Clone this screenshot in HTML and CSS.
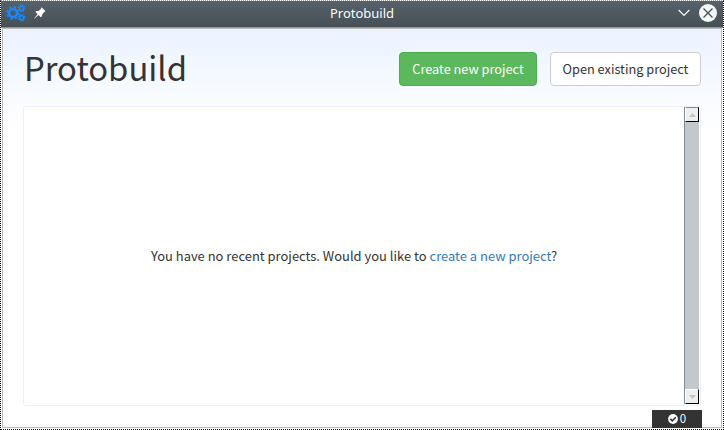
FILE: index.html
```html
<!DOCTYPE html>
<html lang="en">
<head>
<meta charset="utf-8">
<title>Protobuild</title>
<link rel="stylesheet" href="styles.css">
</head>
<body>
<div class="window">
  <header class="titlebar">
    <div class="tools">
      <svg class="gears" width="20" height="18" viewBox="0 0 20 18">
        <g fill="none" stroke="#1a88ff">
          <circle cx="7" cy="9" r="3.9" stroke-width="2.4"/>
          <circle cx="7" cy="9" r="5.7" stroke-width="2" stroke-dasharray="2.4 2.077"/>
          <circle cx="15.6" cy="4.2" r="2" stroke-width="1.4"/>
          <circle cx="15.6" cy="4.2" r="3.2" stroke-width="1.4" stroke-dasharray="1.3 1.213"/>
          <circle cx="15.6" cy="13.8" r="2" stroke-width="1.4"/>
          <circle cx="15.6" cy="13.8" r="3.2" stroke-width="1.4" stroke-dasharray="1.3 1.213"/>
        </g>
      </svg>
      <svg class="pin" width="12" height="12" viewBox="0 0 12 12">
        <path d="M7.5 0.3 11.6 4.2 10.4 4.8 8.2 7.4 7.8 9.6 6.8 10.3 4.5 8 0.5 11.6 0.2 11.3 3.6 7.2 1.5 5 2.3 4.1 4.6 4 7 1.7Z" fill="#fcfcfc"/>
      </svg>
    </div>
    <div class="caption">Protobuild</div>
    <div class="controls">
      <svg width="12" height="8" viewBox="0 0 12 8"><path d="M0.7 1 6 6.3 11.3 1" fill="none" stroke="#fcfcfc" stroke-width="1.2"/></svg>
      <svg width="18" height="18" viewBox="0 0 18 18"><circle cx="9" cy="9" r="9" fill="#f4f5f5"/><path d="M4.5 4.5 13.5 13.5M13.5 4.5 4.5 13.5" stroke="#465056" stroke-width="1.3"/></svg>
    </div>
  </header>
  <main class="page">
    <div class="head">
      <h1>Protobuild</h1>
      <div class="actions">
        <button class="btn primary">Create new project</button>
        <button class="btn">Open existing project</button>
      </div>
    </div>
    <section class="panel">
      <p class="message">You have no recent projects. Would you like to <a>create a new project</a>?</p>
      <div class="scrollbar">
        <div class="arrow"><svg width="7" height="4" viewBox="0 0 7 4"><path d="M3.5 0 7 4H0Z"/></svg></div>
        <div class="arrow"><svg width="7" height="4" viewBox="0 0 7 4"><path d="M0 0H7L3.5 4Z"/></svg></div>
      </div>
    </section>
    <div class="status">
      <svg width="10" height="10" viewBox="0 0 10 10"><circle cx="5" cy="5" r="4.9" fill="#fff"/><path d="M2.3 4.9 4.3 6.8 7.8 3.3" fill="none" stroke="#333" stroke-width="1.6"/></svg>
      <span>0</span>
    </div>
  </main>
</div>
</body>
</html>
```
FILE: styles.css
```css
* { box-sizing: border-box; }
body {
  margin: 0;
  background: #fff;
  color: #333;
  font: 12.93px/20px "Noto Sans CJK SC", "Noto Sans", sans-serif;
}
.window {
  width: 724px;
  height: 430px;
  overflow: hidden;
  border: 1px dotted #000;
  border-top-color: #a89c92;
  display: flex;
  flex-direction: column;
}
.titlebar {
  flex: none;
  height: 27px;
  display: grid;
  grid-template-columns: 1fr auto 1fr;
  align-items: center;
  padding: 0 6px 2px;
  background: linear-gradient(#566169, #465056);
  border-bottom: 1px solid #3daee9;
  color: #fcfcfc;
}
.tools { display: flex; align-items: center; gap: 8px; margin-left: -1px; }
.caption { font: 13px/20px "Noto Sans", sans-serif; }
.controls { display: flex; align-items: center; justify-content: flex-end; gap: 9px; }
.page {
  flex: none;
  height: 400px;
  margin: 0 1px;
  padding: 23px 20px 0;
  border: 1px solid #bbb;
  background: linear-gradient(#ebf3ff, #fff 100px);
}
.head { display: flex; justify-content: space-between; height: 54px; }
h1 { margin: -5px 0 0 1px; font-size: 32.8px; line-height: 40px; font-weight: 400; }
.actions { display: flex; gap: 13px; }
.btn {
  width: 151px;
  height: 34px;
  padding: 0;
  border: 1px solid #ccc;
  border-radius: 4px;
  background: #fff;
  color: #333;
  font: inherit;
  font-size: 12.75px;
}
.primary { width: 138px; background: #5cb85c; border-color: #4cae4c; color: #fff; }
.panel {
  height: 300px;
  display: flex;
  border: 1px solid #eef;
  border-radius: 3px;
  background: #fff;
}
.message { flex: 1; margin: 0; align-self: center; text-align: center; letter-spacing: 0.015px; }
.message a { color: #337ab7; }
.scrollbar {
  width: 15px;
  margin: 0 1px 1px 0;
  display: flex;
  flex-direction: column;
  justify-content: space-between;
  background: #c3c8cc;
  border-left: 1px solid #848b93;
}
.arrow {
  height: 15px;
  display: flex;
  align-items: center;
  justify-content: center;
  background: #efefef;
  border: 1px solid #fff;
  border-right-color: #000;
  border-bottom-color: #000;
}
.scrollbar .arrow:first-child { border-top-color: #848b93; }
.arrow path { fill: #c3c3c3; }
.status {
  width: 50px;
  height: 18px;
  margin: 4px -1px 0 auto;
  padding-bottom: 1px;
  display: flex;
  align-items: center;
  justify-content: center;
  gap: 2px;
  background: #333;
  color: #fff;
  font-size: 11.5px;
  line-height: 17px;
}
```
